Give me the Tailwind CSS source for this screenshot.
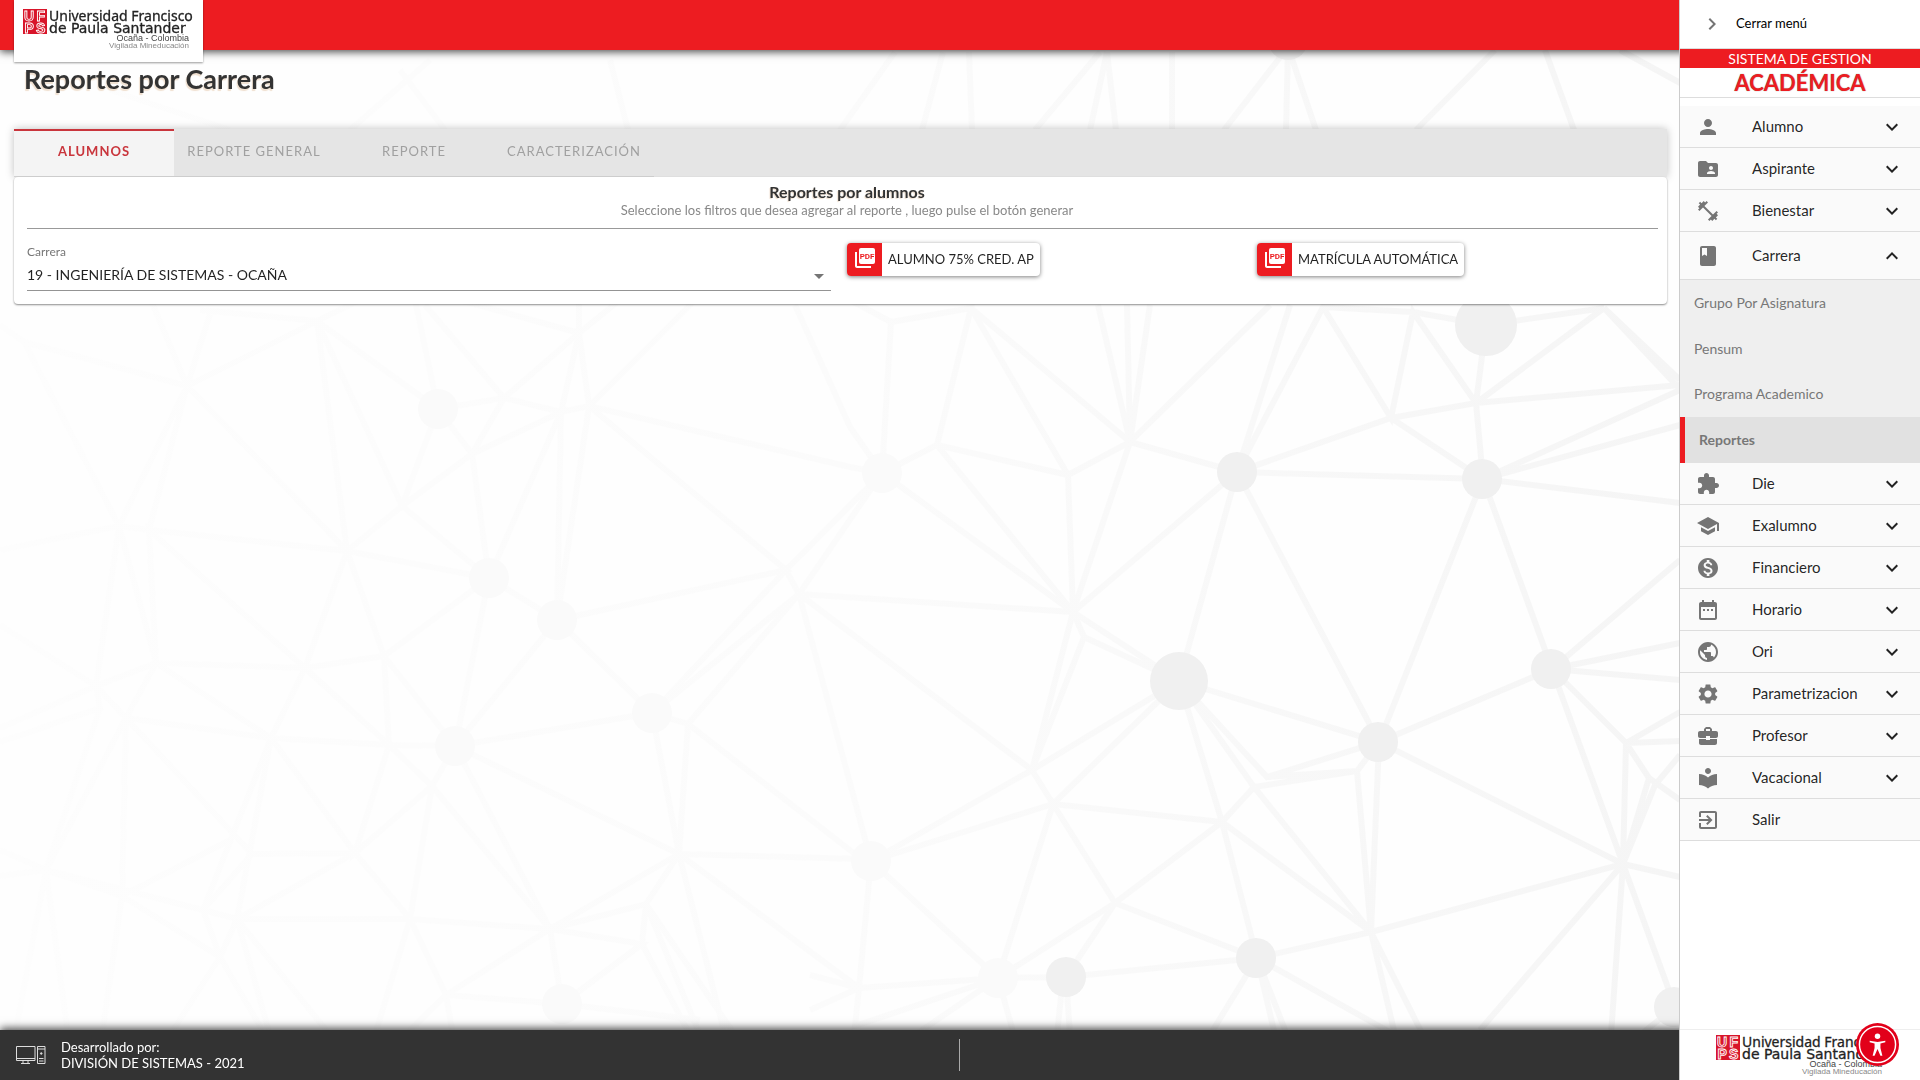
<!DOCTYPE html>
<html lang="es">
<head>
  <meta charset="UTF-8" />
  <meta name="viewport" content="width=device-width, initial-scale=1.0" />
  <title>Reportes por Carrera</title>
  <script src="https://cdn.jsdelivr.net/npm/@tailwindcss/browser@4"></script>
</head>

<body class="min-h-screen flex flex-col bg-[#fefefe] font-['Lato',sans-serif] text-black/87">

  <!-- Shared symbols -->
  <svg class="hidden" aria-hidden="true">
    <symbol id="logo" viewBox="0 0 170 42">
      <rect width="24" height="25" fill="#d8152a" />
      <g fill="none" stroke="#fff" stroke-width="0.9" font-family="Liberation Sans, sans-serif" font-weight="bold" font-size="14">
        <text x="1" y="11.5">U</text>
        <text x="13.5" y="11.5">F</text>
        <text x="1.5" y="23.5">P</text>
        <text x="13" y="23.5">S</text>
      </g>
      <g fill="#222" stroke="#222" stroke-width="0.3">
        <text x="26" y="12" font-family="Noto Sans, sans-serif" font-size="14">Universidad Francisco</text>
        <text x="26" y="24" font-family="DejaVu Sans, sans-serif" font-size="14">de Paula Santander</text>
      </g>
      <g font-family="Liberation Sans, sans-serif" text-anchor="end">
        <text x="166" y="32" font-size="9" fill="#444">Ocaña - Colombia</text>
        <text x="166" y="39" font-size="8" fill="#888">Vigilada Mineducación</text>
      </g>
    </symbol>
    <symbol id="pdf" viewBox="0 0 24 24">
      <path d="M4 6H2v14c0 1.1.9 2 2 2h14v-2H4V6z" fill="#fff" />
      <rect x="6" y="2" width="16" height="16" rx="2" fill="#fff" />
      <text x="14" y="13" text-anchor="middle" font-family="Roboto, sans-serif" font-weight="bold" font-size="8" fill="#ed1c21">PDF</text>
    </symbol>
  </svg>

  <!-- Network backdrop -->
  <svg class="fixed inset-0 -z-10 w-full h-full" viewBox="0 0 1920 1080" preserveAspectRatio="xMidYMid slice" aria-hidden="true">
    <defs>
      <linearGradient id="fade" gradientUnits="userSpaceOnUse" x1="0" y1="0" x2="1680" y2="0">
        <stop offset="0" stop-color="#fdfdfd" />
        <stop offset="0.5" stop-color="#fbfbfb" />
        <stop offset="1" stop-color="#f5f5f5" />
      </linearGradient>
    </defs>
    <g fill="none" stroke="url(#fade)" stroke-width="6">
      <path d="M0 325L24 342L187 386L317 321L438 409L504 398L561 412L589 406L850 467L882 473" />
      <path d="M24 342L119 526L149 530L347 551L489 578L557 620L652 713L688 724L860 858" />
      <path d="M187 386L119 526M187 386L149 530M187 386L347 551L317 321L402 506L347 551M187 386L130 250M200 310L317 321L380 290M210 314L187 386" />
      <path d="M438 409L402 506L472 454L504 398L579 333L589 406L695 300M438 409L472 454L489 578L561 412L472 454M402 506L489 578M438 409L415 300M504 398L425 305" />
      <path d="M561 412L557 620L589 406L786 570L557 620M579 333L561 412M579 333L460 300M579 333L620 300M579 333V300" />
      <path d="M0 550L119 526L156 663L149 530L305 668L347 551L384 656L305 668L156 663L96 686L119 526M0 625L96 686L126 718L156 663L271 738L305 668L389 745L384 656L489 578L455 746L384 656" />
      <path d="M0 728L96 686L100 708L0 742M100 708L46 870L126 718L122 896L46 870L0 850M46 870L0 876M46 870L15 1035M46 870L68 1035M122 896L102 1035M46 870L203 910L237 919H410L550 929L642 944L562 1004L550 929L679 854L860 859" />
      <path d="M126 718L271 738L389 745L455 746L652 713L786 570L799 594L652 713M126 718L252 854L355 853L271 738L203 910L220 957L237 919L271 738M230 840L122 896L220 957L170 1035M252 854L203 910M355 853L237 919L330 1035M237 919L270 1035M220 957L265 1035" />
      <path d="M389 745L355 853L432 786L389 745M355 853L410 919L432 786L455 746L550 929L432 786M410 919L446 995L562 1004L700 1020M410 919L375 1035M446 995L405 1035M446 995L453 1035M550 929L446 995" />
      <path d="M557 620L455 746L679 854L652 713M799 594L688 724L679 854L646 904L642 944L690 1035M646 904L735 1035M679 854L725 1035M679 854L859 988M550 929L646 904L700 1035M786 570L882 473M799 594L882 473M799 594L871 861M799 594L1032 770M799 594L1073 612" />
      <path d="M891 322L882 473L937 445L971 308L891 322L850 300M937 445L1068 475L1130 442L971 308L1068 475L1073 612L882 473M937 445L1073 612L1130 442L1237 472L1391 418L1476 403L1680 385" />
      <path d="M1098 305L1130 442L1127 305M1150 305L1130 442L1270 305M1290 305L1237 472L1323 307L1391 418L1413 312L1476 403L1486 325L1413 312L1323 307M1237 472L1483 479L1391 418M1476 403L1483 479L1680 390M1483 479L1680 425M1483 479L1680 503M1476 403L1604 308L1486 325M1604 308L1680 380M1604 308L1690 400M795 305L850 427L882 473" />
      <path d="M1073 612L1237 472L1179 681L1073 612L1084 637L1179 681L1032 770L1073 612M1084 637L1032 770L1053 804L1179 681M1237 472L1379 742L1483 479L1552 669L1379 742L1179 681L1222 822L1053 804L871 861L1032 770" />
      <path d="M1179 681L1254 787L1222 822L1115 903L1053 804L998 978L871 861L859 988L998 978L1066 977L1257 958L1371 932L1623 864L1379 742L1371 932L1254 787L1357 771L1371 932L1222 822L1257 958L1115 903L998 978M1115 903L1066 977M1179 681L1267 777L1379 742L1357 771L1267 777" />
      <path d="M1552 669L1680 560M1552 669L1680 643M1552 669L1680 680M1552 669L1626 743L1623 864L1552 669M1626 743L1680 712M1626 743L1680 741M1626 743L1649 778L1623 864L1655 785L1680 755M1649 778L1680 800M1623 864L1680 877M1623 864L1675 1007L1640 1035M1623 864L1611 1035M1623 864L1480 1030" />
      <path d="M1257 958L1210 1035M1257 958L1275 1035M1257 958L1287 1035M1257 958L1395 1035M1371 932L1395 1035M1371 932L1423 1035M998 978L855 1026L859 988L810 1010M998 978L915 1035M998 978L1014 1035M1063 977L1057 1035M1066 977L1070 1035M810 975L859 988" />
      <path d="M895 52L840 130M943 52L922 130M969 52L972 130M1100 52L1035 130M1107 52L1090 130M1107 52L1116 130M1172 52V130M1288 47L1224 130M1288 47L1286 130M1288 47L1316 130M1495 50L1416 130M1545 50L1574 130M1620 50L1682 84M430 60L350 130M400 70L445 130M610 60L628 130M110 90L230 130" />
    </g>
    <g fill="#fafafa">
      <circle cx="438" cy="409" r="20" /><circle cx="489" cy="578" r="20" /><circle cx="557" cy="620" r="20" />
      <circle cx="652" cy="713" r="20" /><circle cx="455" cy="746" r="20" /><circle cx="562" cy="1004" r="20" />
      <circle cx="882" cy="473" r="20" /><circle cx="871" cy="861" r="20" /><circle cx="998" cy="978" r="20" />
    </g>
    <g fill="#f0f0f0">
      <circle cx="1486" cy="325" r="31" /><circle cx="1237" cy="472" r="20" /><circle cx="1482" cy="479" r="20" />
      <circle cx="1179" cy="681" r="29" /><circle cx="1378" cy="742" r="20" /><circle cx="1551" cy="669" r="20" />
      <circle cx="1256" cy="958" r="20" /><circle cx="1066" cy="977" r="20" /><circle cx="1674" cy="1007" r="20" />
      <circle cx="1288" cy="40" r="20" />
    </g>
  </svg>

  <!-- Header -->
  <header class="h-[50px] pl-3.5 flex items-start bg-[#ed1c21] shadow-[0_2px_8px_rgba(0,0,0,0.7)]">
    <a href="#" class="block h-[62px] w-[189px] shrink-0 pl-[9px] pt-[9px] bg-white shadow-[0_1px_2px_rgba(0,0,0,0.4)]" aria-label="Universidad Francisco de Paula Santander">
      <svg class="w-[170px] h-[42px]"><use href="#logo" /></svg>
    </a>
  </header>

  <!-- Content -->
  <main class="grow pl-3.5 pr-[253px]">
    <h1 class="pt-3 pl-2.5 text-[27px] leading-[34px] font-bold text-[#333] [text-shadow:-1px_2px_1px_#f0e0d0]">Reportes por Carrera</h1>

    <div class="mt-[33px] h-12 flex bg-[#e5e5e5] text-[13px] tracking-[1px] text-[#a0a0a0] shadow-[0_0_8px_rgba(0,0,0,0.25)]" role="tablist">
      <button role="tab" aria-selected="true" class="w-40 pb-1 border-t-2 border-t-[#c9353c] border-b border-b-[#d2d2d2] bg-[#f4f4f4] font-bold text-[#c9353c]">ALUMNOS</button>
      <button role="tab" aria-selected="false" class="w-40 pb-0.5 border-b border-[#d2d2d2] whitespace-nowrap">REPORTE GENERAL</button>
      <button role="tab" aria-selected="false" class="w-40 pb-0.5 border-b border-[#d2d2d2]">REPORTE</button>
      <button role="tab" aria-selected="false" class="w-40 pb-0.5 border-b border-[#d2d2d2]">CARACTERIZACIÓN</button>
    </div>

    <section class="relative pl-[13px] pt-1.5 pb-[13px] rounded bg-white shadow-[0_1px_2px_rgba(0,0,0,0.45)]">
      <div class="text-center">
        <h2 class="text-base leading-[18px] font-bold text-[#333] [text-shadow:-1px_1px_1px_#f0e0d0]">Reportes por alumnos</h2>
        <p class="text-[13px] leading-[18px] text-[#888]">Seleccione los filtros que desea agregar al reporte , luego pulse el botón generar</p>
      </div>
      <hr class="mt-[9px] mr-[9px] border-[#999]" />

      <div class="mt-3.5 grid grid-cols-[2fr_1fr_1fr] items-start">
        <div class="relative mr-4 pt-px">
          <label for="carrera" class="block text-xs leading-4 text-[#777]">Carrera</label>
          <select id="carrera" class="block w-full h-[31px] pr-8 appearance-none border-b border-[#949494] bg-transparent text-sm">
            <option>19 - INGENIERÍA DE SISTEMAS - OCAÑA</option>
          </select>
          <svg class="absolute right-[7px] bottom-3 w-2.5 h-[5px] pointer-events-none" viewBox="0 0 10 5"><path d="M0 0h10L5 5z" fill="#757575" /></svg>
        </div>
        <div>
          <button class="flex h-[33px] items-stretch rounded overflow-hidden bg-white text-[13px] leading-[33px] shadow-[0_1px_4px_rgba(0,0,0,0.5)]">
            <span class="w-[35px] pb-[3px] flex items-center justify-center bg-[#ed1c21]"><svg class="w-6 h-6"><use href="#pdf" /></svg></span>
            <span class="px-1.5 whitespace-nowrap">ALUMNO 75% CRED. AP</span>
          </button>
        </div>
        <div>
          <button class="flex h-[33px] items-stretch rounded overflow-hidden bg-white text-[13px] leading-[33px] shadow-[0_1px_4px_rgba(0,0,0,0.5)]">
            <span class="w-[35px] pb-[3px] flex items-center justify-center bg-[#ed1c21]"><svg class="w-6 h-6"><use href="#pdf" /></svg></span>
            <span class="px-1.5 whitespace-nowrap">MATRÍCULA AUTOMÁTICA</span>
          </button>
        </div>
      </div>
    </section>
  </main>

  <!-- Footer -->
  <footer class="h-[50px] flex items-center bg-[#333] text-[13px] leading-4 text-white shadow-[0_-2px_8px_rgba(0,0,0,0.7)]">
    <div class="w-1/2 h-8 pl-4 flex items-center border-r border-[#aaa]">
      <svg class="w-[30px] h-5" viewBox="0 0 30 20" fill="none" stroke="#ddd">
        <path d="M.5 1.500h18.500v14H.5zM0 13.500h19M7 16v2M12 16v2M5 18.500h9" />
        <path d="M21.500 1.500h7.500v17h-7.500zM21.500 4h7.500M23 13.500h4.500M23 16h4.500" />
        <circle cx="25.250" cy="8.500" r="0.8" fill="#ddd" />
      </svg>
      <p class="pl-[15px]">Desarrollado por:<br />DIVISIÓN DE SISTEMAS - 2021</p>
    </div>
  </footer>

  <!-- Sidebar -->
  <aside class="fixed inset-y-0 right-0 w-[241px] flex flex-col border-l border-[#ccc] bg-white">
    <button class="h-[49px] shrink-0 pl-5 flex items-center border-b border-[#ddd] text-[13px] text-black">
      <svg class="w-6 h-6 mr-3" viewBox="0 0 24 24" fill="#757575"><path d="M10 6L8.590 7.410 13.170 12l-4.580 4.590L10 18l6-6z" /></svg>
      Cerrar menú
    </button>
    <div class="border-b border-[#ddd] text-center">
      <p class="bg-[#ed1c21] text-sm leading-[19px] text-white">SISTEMA DE GESTION</p>
      <p class="text-[22px] leading-[29px] font-bold text-[#ed1c21] [text-shadow:0_0_1px_#777]">ACADÉMICA</p>
    </div>

    <nav id="menu" class="mt-2 grow"></nav>

    <div class="h-[51px] pl-9 pt-[5px] border-t border-[#eee]">
      <svg class="w-[170px] h-[42px]"><use href="#logo" /></svg>
    </div>
    <button class="absolute right-[21px] bottom-3.5 w-[43px] h-[43px]" aria-label="Accesibilidad">
      <svg viewBox="0 0 44 44">
        <circle cx="22" cy="22" r="22" fill="#e2001a" />
        <circle cx="22" cy="22" r="18.500" fill="none" stroke="#fff" stroke-width="1.500" />
        <circle cx="22" cy="13.500" r="2.800" fill="#fff" />
        <path d="M14 18.200l8 1.300 8-1.300v1.600l-5 1.300v4.400L27 33.500h-2l-3-7-3 7h-2l2-8v-4.400l-5-1.300z" fill="#fff" />
      </svg>
    </button>
  </aside>

  <script>
    const items = [
      ['Alumno', 'M12 12c2.210 0 4-1.790 4-4s-1.790-4-4-4-4 1.790-4 4 1.790 4 4 4zm0 2c-2.670 0-8 1.340-8 4v2h16v-2c0-2.660-5.330-4-8-4z'],
      ['Aspirante', 'M20 6h-8l-2-2H4c-1.100 0-1.990.9-1.990 2L2 18c0 1.100.9 2 2 2h16c1.100 0 2-.9 2-2V8c0-1.100-.9-2-2-2zm-5 3c1.100 0 2 .9 2 2s-.9 2-2 2-2-.9-2-2 .9-2 2-2zm4 8h-8v-1c0-1.330 2.670-2 4-2s4 .67 4 2v1z'],
      ['Bienestar', 'M20.570 14.860L22 13.430 20.570 12 17 15.570 8.430 7 12 3.430 10.570 2 9.140 3.430 7.710 2 5.570 4.140 4.140 2.710 2.710 4.140l1.430 1.430L2 7.710l1.430 1.430L2 10.570 3.430 12 7 8.430 15.570 17 12 20.570 13.430 22l1.430-1.430L16.290 22l2.140-2.140 1.430 1.430 1.430-1.430-1.430-1.430L22 16.290z'],
      ['Carrera', 'M18 2H6c-1.100 0-2 .9-2 2v16c0 1.100.9 2 2 2h12c1.100 0 2-.9 2-2V4c0-1.100-.9-2-2-2zM6 4h5v8l-2.500-1.500L6 12V4z'],
      ['Die', 'M20.500 11H19V7c0-1.100-.9-2-2-2h-4V3.500C13 2.120 11.880 1 10.500 1S8 2.120 8 3.500V5H4c-1.100 0-1.990.9-1.990 2v3.800H3.500c1.490 0 2.700 1.210 2.700 2.700s-1.210 2.700-2.700 2.700H2V20c0 1.100.9 2 2 2h3.800v-1.500c0-1.490 1.210-2.700 2.700-2.700 1.490 0 2.700 1.210 2.700 2.700V22H17c1.100 0 2-.9 2-2v-4h1.500c1.380 0 2.500-1.120 2.500-2.500S21.880 11 20.500 11z'],
      ['Exalumno', 'M5 13.180v4L12 21l7-3.820v-4L12 17l-7-3.820zM12 3L1 9l11 6 9-4.910V17h2V9L12 3z'],
      ['Financiero', 'M12 2C6.480 2 2 6.480 2 12s4.480 10 10 10 10-4.480 10-10S17.520 2 12 2zm1.410 16.090V20h-2.670v-1.930c-1.710-.36-3.160-1.460-3.270-3.400h1.960c.1 1.050.82 1.870 2.650 1.870 1.960 0 2.400-.98 2.400-1.590 0-.83-.44-1.610-2.670-2.140-2.480-.6-4.180-1.620-4.180-3.670 0-1.720 1.390-2.840 3.110-3.210V4h2.670v1.950c1.860.45 2.790 1.860 2.850 3.390H14.300c-.05-1.110-.64-1.870-2.220-1.870-1.500 0-2.400.68-2.400 1.640 0 .84.65 1.390 2.670 1.910s4.180 1.390 4.180 3.910c-.01 1.830-1.380 2.830-3.120 3.160z'],
      ['Horario', 'M9 11H7v2h2v-2zm4 0h-2v2h2v-2zm4 0h-2v2h2v-2zm2-7h-1V2h-2v2H8V2H6v2H5c-1.110 0-1.990.9-1.990 2L3 20c0 1.100.89 2 2 2h14c1.100 0 2-.9 2-2V6c0-1.100-.9-2-2-2zm0 16H5V9h14v11z'],
      ['Ori', 'M12 2C6.480 2 2 6.480 2 12s4.480 10 10 10 10-4.480 10-10S17.520 2 12 2zm-1 17.930c-3.950-.49-7-3.850-7-7.930 0-.62.08-1.210.21-1.790L9 15v1c0 1.100.9 2 2 2v1.930zm6.900-2.540c-.26-.81-1-1.390-1.900-1.390h-1v-3c0-.55-.45-1-1-1H8v-2h2c.55 0 1-.45 1-1V7h2c1.100 0 2-.9 2-2v-.41c2.930 1.190 5 4.060 5 7.410 0 2.080-.8 3.970-2.100 5.390z'],
      ['Parametrizacion', 'M19.140 12.940c.04-.3.060-.61.060-.94 0-.32-.02-.64-.07-.94l2.030-1.580c.18-.14.23-.41.12-.61l-1.920-3.320c-.12-.22-.37-.29-.59-.22l-2.390.96c-.5-.38-1.030-.7-1.620-.94l-.36-2.540c-.04-.24-.24-.41-.48-.41h-3.840c-.24 0-.43.17-.47.41l-.36 2.540c-.59.24-1.130.57-1.620.94l-2.390-.96c-.22-.08-.47 0-.59.22L2.740 8.870c-.12.21-.08.47.12.61l2.030 1.580c-.05.3-.09.63-.09.94s.02.64.07.94l-2.030 1.580c-.18.14-.23.41-.12.61l1.920 3.320c.12.22.37.29.59.22l2.390-.96c.5.38 1.030.7 1.620.94l.36 2.540c.05.24.24.41.48.41h3.840c.24 0 .44-.17.47-.41l.36-2.540c.59-.24 1.130-.56 1.620-.94l2.390.96c.22.08.47 0 .59-.22l1.920-3.320c.12-.22.07-.47-.12-.61l-2.010-1.580zM12 15.600c-1.980 0-3.600-1.620-3.600-3.600s1.620-3.600 3.600-3.600 3.600 1.620 3.600 3.600-1.620 3.600-3.600 3.600z'],
      ['Profesor', 'M10 16v-1H3.010L3 19c0 1.110.89 2 2 2h14c1.110 0 2-.89 2-2v-4h-7v1h-4zm10-9h-4.010V5l-2-2h-4l-2 2v2H4c-1.100 0-2 .9-2 2v3c0 1.110.89 2 2 2h6v-2h4v2h6c1.100 0 2-.9 2-2V9c0-1.100-.9-2-2-2zm-6 0h-4V5h4v2z'],
      ['Vacacional', 'M12 11.550C9.640 9.350 6.480 8 3 8v11c3.480 0 6.640 1.350 9 3.550 2.360-2.190 5.520-3.550 9-3.550V8c-3.480 0-6.640 1.350-9 3.550zM12 8c1.660 0 3-1.340 3-3s-1.340-3-3-3-3 1.340-3 3 1.340 3 3 3z'],
      ['Salir', 'M10.090 15.590L11.500 17l5-5-5-5-1.410 1.410L12.670 11H3v2h9.670l-2.580 2.590zM19 3H5c-1.110 0-2 .9-2 2v4h2V5h14v14H5v-4H3v4c0 1.100.89 2 2 2h14c1.100 0 2-.9 2-2V5c0-1.100-.9-2-2-2z'],
    ];

    const down = 'M7.410 8.590L12 13.170l4.590-4.580L18 10l-6 6-6-6 1.410-1.410z';
    const up = 'M7.410 15.410L12 10.830l4.590 4.580L18 14l-6-6-6 6z';

    const submenu = `
      <div class="h-[183px] grid grid-rows-4 bg-[#efefef] text-sm text-[#777]">
        <a href="#" class="pl-3.5 flex items-center">Grupo Por Asignatura</a>
        <a href="#" class="pl-3.5 flex items-center">Pensum</a>
        <a href="#" class="pl-3.5 flex items-center">Programa Academico</a>
        <a href="#" class="pl-3.5 flex items-center border-l-5 border-[#ed1c21] bg-[#e1e1e1] font-bold">Reportes</a>
      </div>`;

    document.getElementById('menu').innerHTML = items.map(([name, icon]) => {
      const open = name === 'Carrera';
      const arrow = name === 'Salir' ? '' :
        `<svg class="w-6 h-6" viewBox="0 0 24 24" fill="#222"><path d="${open ? up : down}" /></svg>`;
      return `
        <button class="${open ? 'h-12' : 'h-[42px]'} w-full px-4 flex items-center border-b border-[#ddd] bg-[#fafafa] text-[15px]">
          <svg class="w-6 h-6 mr-8" viewBox="0 0 24 24" fill="#757575"><path d="${icon}" /></svg>
          <span class="grow text-left">${name}</span>
          ${arrow}
        </button>
        ${open ? submenu : ''}`;
    }).join('');
  </script>
</body>
</html>
